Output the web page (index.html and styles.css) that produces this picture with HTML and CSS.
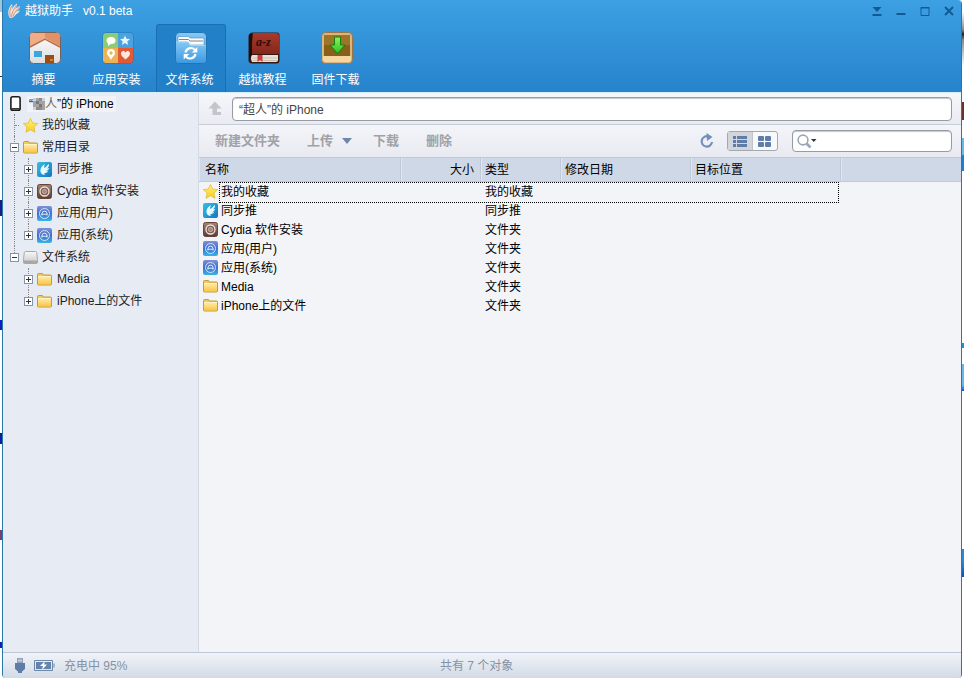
FILE: index.html
```
<!DOCTYPE html>
<html lang="zh-CN">
<head>
<meta charset="utf-8">
<title>越狱助手</title>
<link rel="stylesheet" href="styles.css">
</head>
<body>
<svg class="defs" aria-hidden="true">
  <defs>
    <linearGradient id="gFolder" x1="0" y1="0" x2="0" y2="1"><stop offset="0" stop-color="#ffe9a0"/><stop offset="1" stop-color="#f8c444"/></linearGradient>
    <linearGradient id="gStar" x1="0" y1="0" x2="0" y2="1"><stop offset="0" stop-color="#fff27a"/><stop offset="1" stop-color="#f7cf1c"/></linearGradient>
    <linearGradient id="gPush" x1="0" y1="0" x2="1" y2="1"><stop offset="0" stop-color="#35c0e4"/><stop offset="1" stop-color="#1574c0"/></linearGradient>
    <linearGradient id="gCydia" x1="0" y1="0" x2="0" y2="1"><stop offset="0" stop-color="#a3857a"/><stop offset="1" stop-color="#5d3a30"/></linearGradient>
    <linearGradient id="gApp" x1="0" y1="0" x2="0" y2="1"><stop offset="0" stop-color="#8290d6"/><stop offset=".5" stop-color="#3f6fd0"/><stop offset="1" stop-color="#38b4e6"/></linearGradient>
    <linearGradient id="gDisk" x1="0" y1="0" x2="0" y2="1"><stop offset="0" stop-color="#f8f8f8"/><stop offset="1" stop-color="#c8c8c8"/></linearGradient>
    <linearGradient id="gWin" x1="0" y1="0" x2="0" y2="1"><stop offset="0" stop-color="#85c9f5"/><stop offset="1" stop-color="#3c9ae2"/></linearGradient>
    <linearGradient id="gBook" x1="0" y1="0" x2="0" y2="1"><stop offset="0" stop-color="#a83a2c"/><stop offset="1" stop-color="#84261c"/></linearGradient>
    <linearGradient id="gArrow" x1="0" y1="0" x2="0" y2="1"><stop offset="0" stop-color="#8cf45a"/><stop offset="1" stop-color="#2cc022"/></linearGradient>
    <linearGradient id="gHouse" x1="0" y1="0" x2="0" y2="1"><stop offset="0" stop-color="#ffffff"/><stop offset="1" stop-color="#dcdcdc"/></linearGradient>
    <symbol id="folder" viewBox="0 0 15 15"><path d="M.5 2.500q0-1 1-1h4l1 1.500h7q1 0 1 1V12q0 1-1 1h-12q-1 0-1-1z" fill="#f3c95c" stroke="#c49a3c"/><path d="M1 5h13v7.500H1z" fill="url(#gFolder)"/><path d="M1 4.500h13" stroke="#fff3c4"/></symbol>
    <symbol id="star" viewBox="0 0 15 15"><path d="M7.500.3l2.200 4.700 5 .6-3.700 3.500 1 5.200-4.500-2.500L3 14.300l1-5.200L.3 5.600l5-.6z" fill="url(#gStar)" stroke="#dfae1c" stroke-width=".6"/></symbol>
    <symbol id="push" viewBox="0 0 15 15"><rect width="15" height="15" rx="2" fill="url(#gPush)"/><path d="M3.500 9.500C3 6 6 3 8 2 7 4 7 5 7.500 6 9 5 10 3.500 12 2c.3 2-1 3.500-2 4.500 1 0 1.500-.2 2.300-.5C11.500 8 10 9 9 9c1 .3 1.500.3 2.300.1C10 11 8.500 11.300 7 11c.5.8 1 1 1.600 1.300C6 13.500 3.800 12 3.500 9.500z" fill="#e8faff"/></symbol>
    <symbol id="cydia" viewBox="0 0 15 15"><rect x=".5" y=".5" width="14" height="14" rx="2" fill="url(#gCydia)" stroke="#674439"/><circle cx="7.500" cy="7.500" r="4.500" fill="#7d5b50" stroke="#eee2dc" stroke-width="1.300"/><circle cx="7.500" cy="7.500" r="2.200" fill="#a2877d" stroke="#dcc8c0" stroke-width=".7"/></symbol>
    <symbol id="app" viewBox="0 0 15 15"><rect width="15" height="15" rx="2" fill="url(#gApp)"/><circle cx="7.500" cy="7.500" r="5" fill="none" stroke="#cfe4fa"/><path d="M5 9.500V7.300Q5.200 5.200 7.500 5.200T10 7.300v2.200M4.500 8.200h6" fill="none" stroke="#e4f1ff"/></symbol>
    <symbol id="disk" viewBox="0 0 15 15"><path d="M2.500 1.500h10q1 0 1.200 1l.8 7v3q0 1-1 1h-12q-1 0-1-1v-3l.8-7q.2-1 1.200-1z" fill="url(#gDisk)" stroke="#a8a8a8"/><path d="M1 10.500h13V13H1z" fill="#a6a6a6"/><path d="M10.500 11.800h2" stroke="#8fdc64"/></symbol>
    <symbol id="phone" viewBox="0 0 15 15"><rect x="2.900" y=".8" width="9.200" height="13.400" rx="1.800" fill="#fff" stroke="#1c1c1c" stroke-width="1.600"/><path d="M3.500 12.800h8" stroke="#222" stroke-width="1.400"/></symbol>
  </defs>
</svg>
<div class="desktop">
  <div class="edge edge-left"></div>
  <div class="window">
    <header class="top">
      <div class="titlebar">
        <svg class="logo" width="14" height="16" viewBox="0 0 14 16" aria-hidden="true"><path d="M3 15C0 11 1 5 5 1c1 2 0 4-.5 6C6 4 8 1.500 10 .5c.5 2.500-1.500 5-3 7C8.500 5.500 11 3.500 13 3c0 3-2.500 4.500-4.500 6 1.500-1 3-1.500 4.500-1.500-1 2.500-3.500 3-4.500 4.500S5 15.500 3 15z" fill="#f4e3da"/><path d="M3.500 14C2 10 3 6 4.800 3M4.600 14C4.500 10 7 6 9.500 2M6 13.500C7 10 9.500 7 12.500 4" stroke="#c78868" stroke-width=".8" fill="none"/></svg>
        <h1>越狱助手&nbsp;&nbsp; v0.1 beta</h1>
        <div class="controls">
          <button aria-label="菜单"><svg viewBox="0 0 10 10"><path d="M.5 1h9L5 6zM.5 8h9v2h-9z" fill="#135a92"/></svg></button>
          <button aria-label="最小化"><svg viewBox="0 0 10 10"><path d="M.5 7h9v2h-9z" fill="#135a92"/></svg></button>
          <button aria-label="最大化"><svg viewBox="0 0 10 10"><path d="M1 1.500h8v8H1zM.5 2h9" fill="none" stroke="#135a92"/></svg></button>
          <button aria-label="关闭"><svg viewBox="0 0 10 10"><path d="M1 1l8 8M9 1L1 9" stroke="#135a92" stroke-width="2"/></svg></button>
        </div>
      </div>
      <nav class="tabs">
        <button class="tab">
          <svg viewBox="0 0 32 32"><rect x=".5" y=".5" width="31" height="31" rx="4" fill="url(#gHouse)" stroke="#70645c"/><path d="M1 14V4q0-3 3-3h24q3 0 3 3v10L16 6z" fill="#e19167"/><path d="M1 4q0-3 3-3h12v5L1 14z" fill="#f0ac84"/><path d="M1 15L16 7l15 8" fill="none" stroke="#b96d46" stroke-width="1.500"/><path d="M5 19h8v6H5z" fill="#3ca5df"/><path d="M16 23h9v8h-9z" fill="#9b4c18"/><path d="M21 28h3" stroke="#ffc04d"/></svg>
          <span>摘要</span></button>
        <button class="tab">
          <svg viewBox="0 0 32 32"><rect x=".5" y=".5" width="31" height="31" rx="4" fill="#2275b0"/><path d="M1 16V4q0-3 3-3h12v15z" fill="#8dcc72"/><path d="M16 1h12q3 0 3 3v12H16z" fill="#4aa2de"/><path d="M1 16h15v15H4q-3 0-3-3z" fill="#edb253"/><path d="M16 16h15v12q0 3-3 3H16z" fill="#e25a35"/><ellipse cx="9" cy="8.500" rx="4.500" ry="3.500" fill="#fff"/><path d="M6 10v4l4-3z" fill="#fff"/><path d="M23 3.500l1.400 3.300 3.600.3-2.700 2.300.8 3.600-3.100-1.900-3.100 1.900.8-3.600L18 7.100l3.600-.3z" fill="#e8f5ff"/><path d="M9 28c-1-3-4-4.500-4-7a4 4 0 018 0c0 2.500-3 4-4 7z" fill="#fff"/><circle cx="9" cy="21" r="1.700" fill="#edb253"/><path d="M23.500 27.500c-2-2-4.500-3.500-4.500-6 0-3 3.500-3.500 4.500-1 1-2.500 4.500-2 4.500 1 0 2.500-2.500 4-4.500 6z" fill="#ffe9e0"/></svg>
          <span>应用安装</span></button>
        <button class="tab active" aria-current="page">
          <svg viewBox="0 0 32 32"><rect x=".5" y=".5" width="31" height="31" rx="4" fill="url(#gWin)" stroke="#2273b2"/><path d="M3 12V4.500h10.500l1.500 1.500h14V13H3z" fill="#fafafa" stroke="#4f8ab8" stroke-width=".6"/><path d="M4 7.500h9.500l1.500 1.500h13" stroke="#7c8a94" fill="none"/><path d="M1 9.500h12l2.500 3.500H31v15q0 3-3 3H4q-3 0-3-3z" fill="url(#gWin)"/><path d="M1.500 10h11.200l2.500 3.500H30.500" fill="none" stroke="#a9dbfa" stroke-width=".8"/><path d="M10.500 20.500a5.500 5.500 0 0110-2M20.500 22a5.500 5.500 0 01-10 2" fill="none" stroke="#fff" stroke-width="2.200"/><path d="M22.300 15v5.500h-5.500zM8.700 27.500V22h5.500z" fill="#fff"/></svg>
          <span>文件系统</span></button>
        <button class="tab">
          <svg viewBox="0 0 32 32"><path d="M5 .5h24q2.500 0 2.500 3V28q0 3.500-3 3.500H4Q.5 31.500.5 28V4Q1 .5 5 .5z" fill="#351713"/><path d="M5 1h23q3 0 3 3v18H3z" fill="url(#gBook)"/><path d="M4 23h26v5q0 2-2 2H4q-2-4 0-7z" fill="#e9e1d6"/><path d="M5 26h24M5 28.500h24" stroke="#bcb2a4" stroke-width=".7"/><path d="M9.500 23h5v7L12 28l-2.500 2z" fill="#d13a3a"/><path d="M1 4l3-3v21l-3 5z" fill="#1e0f0e"/><text x="8" y="14" class="book-title">a-z</text></svg>
          <span>越狱教程</span></button>
        <button class="tab">
          <svg viewBox="0 0 32 32"><rect x=".5" y=".5" width="31" height="31" rx="4" fill="#d9b680" stroke="#9b7545"/><path d="M3 3h26v21H3z" fill="#896018"/><path d="M3 3h26v10H3z" fill="#9c7526"/><path d="M2 24h28v4q0 2-2 2H4q-2 0-2-2z" fill="#f5d6a0"/><path d="M13.500 5h6v8h4.500l-7.500 8.500L9 13h4.500z" fill="url(#gArrow)" stroke="#118112"/></svg>
          <span>固件下载</span></button>
      </nav>
    </header>

    <div class="body">
      <aside class="sidebar">
        <div class="device"><svg><use href="#phone"/></svg><span class="device-name">“<svg class="mosaic" viewBox="0 0 12 12" aria-hidden="true"><path d="M0 0h12v12H0z" fill="#a4a4a6"/><path d="M0 0h3v3H0zM9 0h3v3H9zM0 9h3v3H0z" fill="#cfd0d3"/><path d="M3 3h3v3H3zM6 6h3v3H6z" fill="#77787a"/><path d="M6 0h3v3H6zM3 9h6v3H3z" fill="#8b8c8e"/></svg><span class="faded">人</span>”的 iPhone</span></div>
        <ul class="tree">
          <li><div class="node"><i class="leaf"></i><svg><use href="#star"/></svg>我的收藏</div></li>
          <li><div class="node"><button class="toggle open" aria-label="收起"></button><svg><use href="#folder"/></svg>常用目录</div>
            <ul>
              <li><div class="node"><button class="toggle" aria-label="展开"></button><svg><use href="#push"/></svg>同步推</div></li>
              <li><div class="node"><button class="toggle" aria-label="展开"></button><svg><use href="#cydia"/></svg>Cydia 软件安装</div></li>
              <li><div class="node"><button class="toggle" aria-label="展开"></button><svg><use href="#app"/></svg>应用(用户)</div></li>
              <li><div class="node"><button class="toggle" aria-label="展开"></button><svg><use href="#app"/></svg>应用(系统)</div></li>
            </ul>
          </li>
          <li><div class="node"><button class="toggle open" aria-label="收起"></button><svg><use href="#disk"/></svg>文件系统</div>
            <ul>
              <li><div class="node"><button class="toggle" aria-label="展开"></button><svg><use href="#folder"/></svg>Media</div></li>
              <li><div class="node"><button class="toggle" aria-label="展开"></button><svg><use href="#folder"/></svg>iPhone上的文件</div></li>
            </ul>
          </li>
        </ul>
      </aside>

      <main class="content">
        <div class="pathbar">
          <button class="up" aria-label="向上"><svg width="14" height="16" viewBox="0 0 14 16"><path d="M7 .5L.5 7.500H4.500V14h8.500v-3H9V7.500h4.500z" fill="#c3c5ca"/></svg></button>
          <input class="path" aria-label="路径" value="“超人”的 iPhone">
        </div>
        <div class="toolbar">
          <button class="action">新建文件夹</button>
          <button class="action">上传 <svg width="10" height="6" viewBox="0 0 10 6"><path d="M0 0h10L5 6z" fill="#6f87a8"/></svg></button>
          <button class="action">下载</button>
          <button class="action">删除</button>
          <button class="refresh" aria-label="刷新"><svg width="14" height="16" viewBox="0 0 14 16"><path d="M8.500 3.500A5.200 5.200 0 1012 9" fill="none" stroke="#6f8fbc" stroke-width="2.200"/><path d="M6.500 0L12.500 4 7 8z" fill="#6f8fbc"/></svg></button>
          <div class="views">
            <button class="on" aria-label="列表"><svg width="14" height="11" viewBox="0 0 14 11"><path d="M0 0h3v3H0zM4 0h10v3H4zM0 4h3v3H0zM4 4h10v3H4zM0 8h3v3H0zM4 8h10v3H4z" fill="#5f7da8"/></svg></button>
            <button aria-label="图标"><svg width="14" height="11" viewBox="0 0 14 11"><g fill="#5f7da8"><rect width="6" height="5" rx="1"/><rect x="7" width="6" height="5" rx="1"/><rect y="6" width="6" height="5" rx="1"/><rect x="7" y="6" width="6" height="5" rx="1"/></g></svg></button>
          </div>
          <label class="search"><svg width="20" height="14" viewBox="0 0 20 14"><circle cx="6" cy="6" r="4.900" fill="none" stroke="#9aa8b8" stroke-width="1.600"/><path d="M9.500 9.500l4 4" stroke="#9aa8b8" stroke-width="2.600"/><path d="M14 5h5.500l-2.700 3z" fill="#333"/></svg><input type="search" aria-label="搜索"></label>
        </div>
        <table class="files">
          <colgroup><col class="c-name"><col class="c-size"><col class="c-type"><col class="c-date"><col class="c-target"><col></colgroup>
          <thead><tr><th>名称</th><th class="num">大小</th><th>类型</th><th>修改日期</th><th>目标位置</th><th></th></tr></thead>
          <tbody>
            <tr class="focused"><td><div class="file"><svg><use href="#star"/></svg>我的收藏</div></td><td></td><td>我的收藏</td><td></td><td></td><td></td></tr>
            <tr><td><div class="file"><svg><use href="#push"/></svg>同步推</div></td><td></td><td>同步推</td><td></td><td></td><td></td></tr>
            <tr><td><div class="file"><svg><use href="#cydia"/></svg>Cydia 软件安装</div></td><td></td><td>文件夹</td><td></td><td></td><td></td></tr>
            <tr><td><div class="file"><svg><use href="#app"/></svg>应用(用户)</div></td><td></td><td>文件夹</td><td></td><td></td><td></td></tr>
            <tr><td><div class="file"><svg><use href="#app"/></svg>应用(系统)</div></td><td></td><td>文件夹</td><td></td><td></td><td></td></tr>
            <tr><td><div class="file"><svg><use href="#folder"/></svg>Media</div></td><td></td><td>文件夹</td><td></td><td></td><td></td></tr>
            <tr><td><div class="file"><svg><use href="#folder"/></svg>iPhone上的文件</div></td><td></td><td>文件夹</td><td></td><td></td><td></td></tr>
          </tbody>
        </table>
      </main>
    </div>

    <footer class="status">
      <svg width="10" height="16" viewBox="0 0 10 16"><path d="M2 0h6v5H2z" fill="#8fa0b8"/><path d="M3.500 1.500h1v2h-1zM5.500 1.500h1v2h-1z" fill="#fff"/><path d="M0 5h10v6l-3 2.500V15H3v-1.500L0 11z" fill="#5d7ca6"/></svg>
      <svg width="21" height="11" viewBox="0 0 21 11"><path d="M.5.5h18v10H.5zM20 3.500v4" fill="none" stroke="#6f87a8"/><path d="M2 2h15v7H2z" fill="#6483ad"/><path d="M11 1L6 6h3l-1 4 5-5.500h-3z" fill="#fff"/></svg>
      <span>充电中 95%</span>
      <span class="count">共有 7 个对象</span>
    </footer>
  </div>
  <div class="edge edge-right"></div>
</div>
</body>
</html>
```
FILE: styles.css
```
* { box-sizing: border-box; }

body {
  margin: 0;
  background: #fff;
  color: #222;
  font: 12px/16px "Liberation Sans", "Noto Sans CJK SC", sans-serif;
}

button, input {
  margin: 0;
  padding: 0;
  border: 0;
  background: none;
  color: inherit;
  font: inherit;
}

h1, ul { margin: 0; padding: 0; list-style: none; }
svg { display: block; flex: none; }
.defs { position: absolute; width: 0; height: 0; }

.desktop { display: flex; min-height: 100vh; }
.edge { flex: 0 0 2px; }
.edge-left {
  background: linear-gradient(#9fc4dd 0 12px, #fff 12px 76px, #333 76px 77px, #fff 77px 200px, #1b1b8c 200px 216px, #fff 216px 320px, #0b1fc4 320px 330px, #fff 330px 433px, #0b1fa0 433px 444px, #fff 444px 530px, #7b3b78 530px 540px, #fff 540px 642px, #0b1fc4 642px 648px, #fff 648px);
}
.edge-right {
  background: linear-gradient(#fff 0 12px, #888 30px, #222 34px, #888 40px, #fff 66px 102px, #6b3030 102px 120px, #fff 120px 138px, #6bb8e6 138px 155px, #1a80d0 155px 171px, #fff 171px 343px, #1d8fdc 343px 348px, #fff 348px 364px, #69b7ee 364px 385px, #0c4ec0 391px, #fff 391px 549px, #2f86d2 549px 562px, #104bc0 577px, #fff 577px);
}

.window {
  flex: 1;
  min-width: 0;
  display: flex;
  flex-direction: column;
  border: solid #2a78a8;
  border-width: 0 1px;
  border-radius: 0 4px 4px 4px;
  overflow: hidden;
}

/* Header */
.top { background: linear-gradient(#3da0e3, #2683cc); color: #fff; }
.titlebar { display: flex; align-items: center; height: 24px; padding: 0 7px 2px 4px; gap: 4px; }
.titlebar h1 { font-size: 12px; font-weight: normal; }
.controls { display: flex; gap: 14px; margin-left: auto; }
.controls svg { width: 10px; height: 10px; }
.tabs { display: flex; gap: 3px; padding-left: 7px; }
.tab {
  display: flex;
  flex-direction: column;
  align-items: center;
  gap: 8px;
  width: 70px;
  height: 68px;
  padding-top: 7px;
  border: 1px solid transparent;
  border-bottom: 0;
}
.tab svg { width: 34px; height: 32px; }
.tab span { padding-right: 3px; }
.tab.active { background: #2180c8; border-color: #1a6fb4; border-radius: 3px 3px 0 0; }
.book-title { font: italic bold 12px "Liberation Serif", serif; fill: #2d0d0a; }

/* Layout */
.body { flex: 1; display: flex; border-top: 1px solid #d4eefb; }

/* Sidebar */
.sidebar { flex: 0 0 196px; background: #e7ebf3; border-right: 1px solid #d3dae6; }
.sidebar svg { width: 15px; height: 15px; }
.device { display: flex; align-items: center; gap: 4px; height: 21px; padding-left: 5px; color: #000; }
.device-name { display: flex; align-items: center; padding: 0 2px; background: #f1f2f5; white-space: pre; }
.sidebar .mosaic { width: 12px; height: 12px; }
.faded { color: #666; }
.tree > li { position: relative; }
.tree ul li { position: relative; }
.node { display: flex; align-items: center; gap: 4px; height: 22px; padding-left: 7px; }
.tree ul .node { padding-left: 21px; }
.tree ul .node svg { margin-right: 1px; }
.leaf { width: 9px; }
.leaf::after { content: ""; display: block; margin-left: 5px; border-top: 1px dotted #888; }
.tree li::before {
  content: "";
  position: absolute;
  top: 0;
  bottom: 0;
  left: 11px;
  border-left: 1px dotted #888;
}
.tree ul li::before { left: 25px; }
.tree > li:last-child::before, .tree ul li:last-child::before { bottom: auto; height: 11px; }
.toggle {
  position: relative;
  width: 9px;
  height: 9px;
  border: 1px solid #8a93a3;
  background: linear-gradient(#333, #333) center / 5px 1px no-repeat, linear-gradient(#333, #333) center / 1px 5px no-repeat, #fff;
}
.toggle.open { background: linear-gradient(#333, #333) center / 5px 1px no-repeat, #fff; }

/* Content */
.content { flex: 1; min-width: 0; background: #f2f4f8; }
.pathbar {
  display: flex;
  align-items: center;
  gap: 10px;
  height: 32px;
  padding: 0 9px;
  background: linear-gradient(#f5f7fa, #e9ebf2);
  border-bottom: 1px solid #c8ccd6;
}
.path, .search {
  height: 24px;
  border: 1px solid #979ba4;
  border-radius: 4px;
  background: #fff;
  box-shadow: inset 0 1px 1px #c4c8ce;
}
.path { flex: 1; min-width: 0; padding: 0 6px; color: #444; }
.toolbar {
  display: flex;
  align-items: center;
  height: 32px;
  padding: 0 9px 0 16px;
  background: linear-gradient(#f4f5f9, #e8eaf1);
}
.action {
  display: flex;
  align-items: center;
  gap: 9px;
  margin-right: 27px;
  color: #a0a2a7;
  font-size: 13px;
  font-weight: bold;
}
.action:nth-child(2) { margin-right: 21px; }
.refresh { margin: 0 13px 0 auto; }
.views {
  display: flex;
  width: 51px;
  height: 20px;
  margin-right: 14px;
  border: 1px solid #a4a8af;
  border-radius: 3px;
  background: #f8f9fb;
}
.views button { flex: 1; display: flex; align-items: center; justify-content: center; }
.views .on { background: #d2d5da; border-right: 1px solid #c0c4ca; }
.search { display: flex; align-items: center; width: 160px; height: 22px; padding-left: 4px; }
.search input { flex: 1; min-width: 0; outline: 0; }

/* File table */
.files { width: 100%; table-layout: fixed; border-collapse: separate; border-spacing: 0; color: #000; }
.c-name { width: 202px; }
.c-size, .c-type { width: 80px; }
.c-date { width: 130px; }
.c-target { width: 150px; }
.files th {
  height: 25px;
  padding: 0 6px 0 4px;
  border: solid #bfc9d9;
  border-width: 1px 1px 1px 0;
  box-shadow: inset 1px 0 #e2e8f1;
  background: #cfd8e6;
  font-weight: normal;
  text-align: left;
}
.files th:first-child { padding-left: 6px; }
.files th:last-child { border-right: 0; }
.files th.num { text-align: right; }
.files td { height: 19px; padding: 0 4px; white-space: nowrap; }
.file { display: flex; align-items: center; gap: 3px; height: 19px; }
.file svg { width: 15px; height: 15px; }
.focused { position: relative; }
.focused td:first-child::after {
  content: "";
  position: absolute;
  top: 0;
  left: 20px;
  width: 618px;
  height: 19px;
  border: 1px dotted #000;
}

/* Status bar */
.status {
  display: grid;
  grid-template-columns: 10px 21px 367px 1fr;
  align-items: center;
  gap: 9px;
  height: 26px;
  padding-left: 12px;
  border-top: 1px solid #bcc6d4;
  background: linear-gradient(#f0f3f8, #d3dbe7);
  color: #8592a5;
}
```
